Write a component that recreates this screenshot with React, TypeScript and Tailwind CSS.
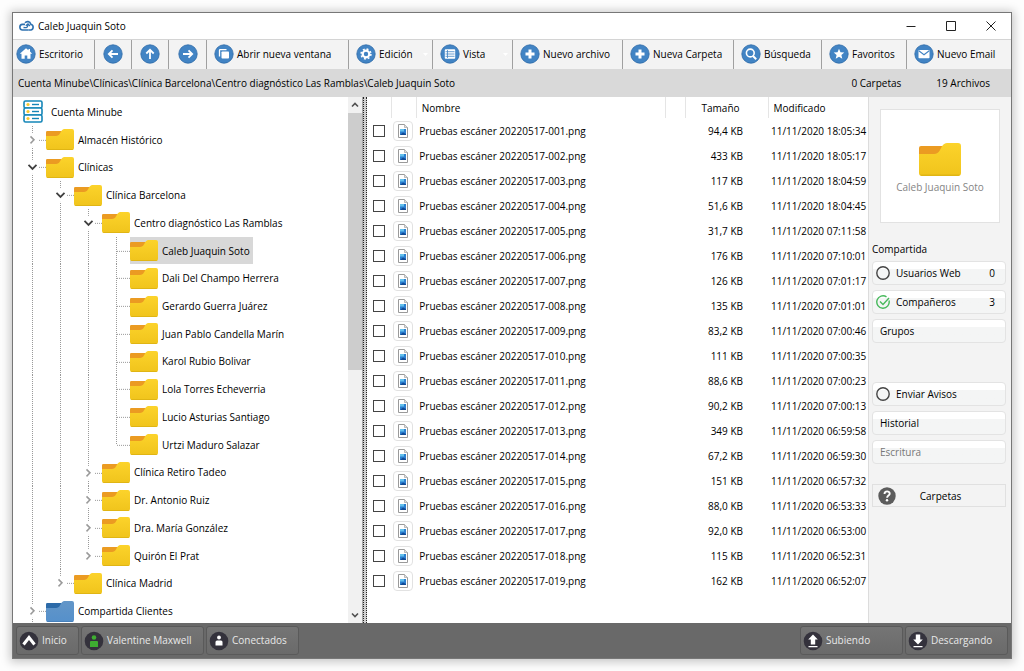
import { useState } from "react";
import type { ReactNode } from "react";

type TreeItem = {
  label: string;
  guides: boolean[];
  last?: boolean;
  state?: "open" | "closed";
  blue?: boolean;
};

const TREE: TreeItem[] = [
  { label: "Almacén Histórico", guides: [], state: "closed" },
  { label: "Clínicas", guides: [], state: "open" },
  { label: "Clínica Barcelona", guides: [true], state: "open" },
  { label: "Centro diagnóstico Las Ramblas", guides: [true, true], state: "open" },
  { label: "Caleb Juaquin Soto", guides: [true, true, true] },
  { label: "Dali Del Champo Herrera", guides: [true, true, true] },
  { label: "Gerardo Guerra Juárez", guides: [true, true, true] },
  { label: "Juan Pablo Candella Marín", guides: [true, true, true] },
  { label: "Karol Rubio Bolivar", guides: [true, true, true] },
  { label: "Lola Torres Echeverria", guides: [true, true, true] },
  { label: "Lucio Asturias Santiago", guides: [true, true, true] },
  { label: "Urtzi Maduro Salazar", guides: [true, true, true], last: true },
  { label: "Clínica Retiro Tadeo", guides: [true, true], state: "closed" },
  { label: "Dr. Antonio Ruiz", guides: [true, true], state: "closed" },
  { label: "Dra. María González", guides: [true, true], state: "closed" },
  { label: "Quirón El Prat", guides: [true, true], state: "closed", last: true },
  { label: "Clínica Madrid", guides: [true], state: "closed", last: true },
  { label: "Compartida Clientes", guides: [], state: "closed", blue: true },
];

const FILES = [
  ["001", "94,4 KB", "18:05:34"],
  ["002", "433 KB", "18:05:17"],
  ["003", "117 KB", "18:04:59"],
  ["004", "51,6 KB", "18:04:45"],
  ["005", "31,7 KB", "07:11:58"],
  ["006", "176 KB", "07:10:01"],
  ["007", "126 KB", "07:01:17"],
  ["008", "135 KB", "07:01:01"],
  ["009", "83,2 KB", "07:00:46"],
  ["010", "111 KB", "07:00:35"],
  ["011", "88,6 KB", "07:00:23"],
  ["012", "90,2 KB", "07:00:13"],
  ["013", "349 KB", "06:59:58"],
  ["014", "67,2 KB", "06:59:30"],
  ["015", "151 KB", "06:57:32"],
  ["016", "88,0 KB", "06:53:33"],
  ["017", "92,0 KB", "06:53:00"],
  ["018", "115 KB", "06:52:31"],
  ["019", "162 KB", "06:52:07"],
];

function Folder({ className, blue }: { className: string; blue?: boolean }) {
  const id = blue ? "folder-blue" : "folder-yellow";
  return (
    <svg viewBox="0 0 42 33" preserveAspectRatio="none" className={className} aria-hidden="true">
      <defs>
        <linearGradient id={id} x1="0" y1="0" x2="0" y2="1">
          <stop offset="0" stopColor={blue ? "#6396c8" : "#fcd32b"} />
          <stop offset="1" stopColor={blue ? "#5590cb" : "#f0c41c"} />
        </linearGradient>
      </defs>
      <path d="M2 3h22v16H0V5q0-2 2-2z" fill={blue ? "#2c6aa8" : "#eb9b22"} />
      <path d="M0 11h15c6 0 6-6 9-9 1-1 2-2 4-2h11q3 0 3 3v27q0 3-3 3H3q-3 0-3-3z" fill={`url(#${id})`} />
      <path d="M1 31.500q1 1.500 2 1.500h36q1 0 2-1.500z" fill={blue ? "#4680bb" : "#e0b514"} />
    </svg>
  );
}

function Guide({ visible }: { visible: boolean }) {
  return (
    <svg className="h-full w-7 shrink-0" aria-hidden="true">
      {visible && <line x1="14.5" x2="14.5" y1="0" y2="100%" stroke="#999" strokeDasharray="1 1" />}
    </svg>
  );
}

function Branch({ last, state }: { last?: boolean; state?: "open" | "closed" }) {
  return (
    <svg className="h-full w-7 shrink-0" aria-hidden="true">
      <line x1="14.5" x2="14.5" y1="0" y2={last ? "50%" : "100%"} stroke="#999" strokeDasharray="1 1" />
      <svg y="50%" overflow="visible">
        {state && <rect x="8" y="-7" width="12" height="14" fill="#fff" />}
        <path d={state ? "M21 .5h7" : "M15 .5h13"} stroke="#999" strokeDasharray="1 1" />
        {state === "open" && <path d="m10.500-2 4 4 4-4" fill="none" stroke="#404040" strokeWidth="1.800" />}
        {state === "closed" && <path d="m12.500-3.500 3.500 3.500-3.500 3.500" fill="none" stroke="#9a9a9a" strokeWidth="1.500" />}
      </svg>
    </svg>
  );
}

function ServerIcon() {
  return (
    <svg viewBox="0 0 20 23" className="h-[23px] w-5 shrink-0" aria-hidden="true">
      {[1, 8, 15].map((y) => (
        <g key={y}>
          <rect x="1" y={y} width="18" height="7" rx="1.500" fill="#fff" stroke="#1586b8" strokeWidth="1.600" />
          <circle cx="5" cy={y + 3.5} r="1.600" fill="#f5c72c" />
          <path d={`M9 ${y + 3.5}h7`} stroke="#1586b8" strokeWidth="1.400" />
        </g>
      ))}
    </svg>
  );
}

function Disc({ children }: { children: ReactNode }) {
  return (
    <svg viewBox="0 0 20 20" className="size-5 shrink-0" aria-hidden="true" fill="none" stroke="#fff" strokeWidth="1.800">
      <circle cx="10" cy="10" r="9.200" fill="#4284c4" stroke="#2f6ba8" strokeWidth="0.800" />
      {children}
    </svg>
  );
}

const plus = <path d="M10 5.500v9M5.500 10h9" strokeWidth="3" />;

const TOOLS: { label: string; text?: string; icon: ReactNode; menu?: boolean }[] = [
  { label: "Escritorio", text: "Escritorio", icon: <path d="M10 4.200 3.800 9.800h1.700v5h3.200v-3.300h2.600v3.300h3.200v-5h1.700L14 7.600V5h-1.500v1.300z" fill="#fff" stroke="none" /> },
  { label: "Atrás", icon: <path d="M15 10H6M9.500 6.300 5.800 10l3.700 3.700" /> },
  { label: "Subir nivel", icon: <path d="M10 15V6M6.300 9.500 10 5.800l3.700 3.700" /> },
  { label: "Adelante", icon: <path d="M5 10h9M10.500 6.300l3.700 3.700-3.700 3.700" /> },
  {
    label: "Abrir nueva ventana",
    text: "Abrir nueva ventana",
    icon: (
      <>
        <path d="M12.500 5.700H6.200q-.7 0-.7.7v6" strokeWidth="1.300" />
        <rect x="7.500" y="7.500" width="7.500" height="7" rx=".8" fill="#fff" stroke="none" />
      </>
    ),
  },
  {
    label: "Edición",
    text: "Edición",
    menu: true,
    icon: (
      <>
        <circle cx="10" cy="10" r="3.300" strokeWidth="2.200" />
        <circle cx="10" cy="10" r="4.900" strokeWidth="1.600" strokeDasharray="1.900 1.950" />
      </>
    ),
  },
  {
    label: "Vista",
    text: "Vista",
    menu: true,
    icon: (
      <>
        <rect x="4.800" y="5.300" width="10.400" height="9.400" rx=".8" fill="#fff" stroke="none" />
        <path d="M5.500 7.700h9M5.500 10h9M5.500 12.300h9M7.500 6v8" stroke="#4284c4" strokeWidth=".8" />
      </>
    ),
  },
  { label: "Nuevo archivo", text: "Nuevo archivo", icon: plus },
  { label: "Nueva Carpeta", text: "Nueva Carpeta", icon: plus },
  {
    label: "Búsqueda",
    text: "Búsqueda",
    icon: (
      <>
        <circle cx="9.300" cy="9" r="3.900" strokeWidth="1.600" />
        <path d="m12 12 3.200 3.200" strokeWidth="2" />
      </>
    ),
  },
  { label: "Favoritos", text: "Favoritos", icon: <path d="m10 4.800 1.500 3.500 3.800.3-2.900 2.500.9 3.700-3.300-2-3.300 2 .9-3.700-2.900-2.500 3.800-.3z" fill="#fff" stroke="none" /> },
  {
    label: "Nuevo Email",
    text: "Nuevo Email",
    icon: (
      <>
        <rect x="4.500" y="6" width="11" height="8.300" rx=".8" fill="#fff" stroke="none" />
        <path d="m4.800 6.800 5.200 4 5.200-4" stroke="#4284c4" strokeWidth="1.100" />
      </>
    ),
  },
];

function FileIcon() {
  return (
    <span className="flex size-5 items-center justify-center rounded-sm border border-[#e2e2e2] bg-white">
      <svg viewBox="0 0 12 14" className="h-3.5 w-3" aria-hidden="true">
        <path d="M1.500.5h6l3 3v10h-9z" fill="#fff" stroke="#9a9a9a" />
        <path d="M7.500.5v3h3" fill="#ddd" stroke="#a5a5a5" strokeWidth=".7" />
        <rect x="3" y="5" width="6" height="6" fill="#2b7fd0" />
        <path d="M3 5h4v2.500H3z" fill="#63c0ec" />
        <path d="m3 11 3-2.500L9 10v1z" fill="#134a94" />
      </svg>
    </span>
  );
}

function SideButton({ children, muted }: { children: ReactNode; muted?: boolean }) {
  return (
    <button
      type="button"
      className={`flex h-6 w-full items-center rounded border border-[#e3e3e3] bg-linear-to-b from-white from-30% to-[#f4f5f5] to-30% text-left ${muted ? "text-[#777]" : ""}`}
    >
      {children}
    </button>
  );
}

function Ring() {
  return (
    <svg viewBox="0 0 14 14" className="ml-[3px] mr-1.5 size-3.5 shrink-0" aria-hidden="true">
      <circle cx="7" cy="7" r="6.200" fill="none" stroke="#444" strokeWidth="1.400" />
    </svg>
  );
}

function TaskButton({ label, className, children }: { label: string; className: string; children: ReactNode }) {
  return (
    <button
      type="button"
      className={`flex h-[29px] items-center gap-[3px] rounded-[3px] border border-[#5a5a5a] bg-linear-to-b from-[#757575] to-[#6a6a6a] pl-0.5 text-[#e8e8e8] ${className}`}
    >
      <svg viewBox="0 0 20 20" className="size-5 shrink-0" aria-hidden="true">
        <circle cx="10" cy="10" r="9.300" fill="#34323c" />
        {children}
      </svg>
      <span className="pb-0.5">{label}</span>
    </button>
  );
}

export default function App() {
  const [selected, setSelected] = useState("Caleb Juaquin Soto");

  return (
    <div className="flex h-screen bg-[#fdfdfd] p-3 font-['Open_Sans',sans-serif] text-[10px] leading-4 text-black">
      <div className="flex min-w-0 flex-1 flex-col border border-[#777] bg-white shadow-[0_1px_9px_2px_#00000038]">
        <header className="flex h-[27px] shrink-0 items-center border-b border-[#d4d4d4] pl-1.5 pb-px">
          <svg viewBox="0 0 16 12" className="mr-[3px] h-3 w-4" aria-hidden="true" fill="none" stroke="#2e71b0" strokeWidth="1.600">
            <path d="M9.500 10H4a2.800 2.800 0 0 1-.6-5.600H6" />
            <path d="M6 2.800C7.500 1 11 1 11.800 4.200A3 3 0 0 1 12 10H9.500" />
            <path d="M4.500 7.500c3.500.6 4.300-.5 4.500-3M6.800 5.800 9 3.800l2 2.200" strokeWidth="1.300" />
          </svg>
          <h1 className="flex-1">Caleb Juaquin Soto</h1>
          <button type="button" aria-label="Minimizar" className="flex w-10 justify-center">
            <svg viewBox="0 0 10 10" className="size-2.5" stroke="#222"><path d="M.5 5.500h9" /></svg>
          </button>
          <button type="button" aria-label="Maximizar" className="flex w-10 justify-center">
            <svg viewBox="0 0 10 10" className="size-2.5" fill="none" stroke="#222"><path d="M.5.5h9v9h-9z" /></svg>
          </button>
          <button type="button" aria-label="Cerrar" className="flex w-10 justify-center">
            <svg viewBox="0 0 10 10" className="size-2.5" stroke="#222"><path d="m.5.5 9 9M9.500.5l-9 9" /></svg>
          </button>
        </header>

        <nav className="grid h-[29px] shrink-0 grid-cols-[82fr_37fr_37fr_38fr_142fr_84fr_80fr_110fr_111fr_88fr_85fr_104fr] bg-[#f3f3f3]">
          {TOOLS.map((tool, i) => (
            <button
              key={tool.label}
              type="button"
              aria-label={tool.label}
              className={`flex min-w-0 items-center gap-[3px] whitespace-nowrap pb-px ${i < TOOLS.length - 1 ? "border-r border-[#a0a0a0]" : ""} ${tool.text ? (i ? "pl-[7px]" : "pl-[3px]") : "justify-center"}`}
            >
              <Disc>{tool.icon}</Disc>
              {tool.text}
              {tool.menu && (
                <svg viewBox="0 0 5 3" className="ml-auto mr-1 h-[3px] w-[5px]" aria-hidden="true"><path d="M0 0h5L2.500 3z" fill="#fff" /></svg>
              )}
            </button>
          ))}
        </nav>

        <div className="flex h-7 shrink-0 items-center bg-[#d9d9d9] pl-[5px] pr-[21px]">
          <span className="flex-1">Cuenta Minube\Clínicas\Clínica Barcelona\Centro diagnóstico Las Ramblas\Caleb Juaquin Soto</span>
          <span className="mr-[35px]">0 Carpetas</span>
          <span>19 Archivos</span>
        </div>

        <main className="flex min-h-0 flex-1">
          <section className="flex w-[35%] overflow-hidden" aria-label="Carpetas">
            <ul className="flex h-[528px] min-w-0 flex-1 flex-col pl-[5px] pt-px">
              <li className="flex min-h-0 flex-1 items-center gap-2 pl-[5px]">
                <ServerIcon />
                Cuenta Minube
              </li>
              {TREE.map((item) => (
                <li key={item.label} className="flex min-h-0 flex-1 items-center">
                  {item.guides.map((visible, i) => <Guide key={i} visible={visible} />)}
                  <Branch last={item.last} state={item.state} />
                  <button
                    type="button"
                    onClick={() => setSelected(item.label)}
                    className={`flex h-full items-center gap-1 whitespace-nowrap pr-[3px] ${selected === item.label ? "bg-[#d8d8d8]" : ""}`}
                  >
                    <Folder className="h-[21px] w-7 shrink-0" blue={item.blue} />
                    {item.label}
                  </button>
                </li>
              ))}
            </ul>
            <div className="flex w-3.5 shrink-0 flex-col bg-[#f1f1f1]">
              <button type="button" aria-label="Desplazar arriba" className="flex h-4 items-center justify-center">
                <svg viewBox="0 0 8 6" className="h-1.5 w-2" fill="none" stroke="#505050" strokeWidth="1.600"><path d="m1 4.500 3-3 3 3" /></svg>
              </button>
              <div className="min-h-0 flex-1"><div className="h-[52%] bg-[#cdcdcd]" /></div>
              <button type="button" aria-label="Desplazar abajo" className="flex h-4 items-center justify-center">
                <svg viewBox="0 0 8 6" className="h-1.5 w-2" fill="none" stroke="#505050" strokeWidth="1.600"><path d="m1 1.500 3 3 3-3" /></svg>
              </button>
            </div>
          </section>
          <div className="flex w-[5px] shrink-0 border-l border-[#a8a8a8] bg-[#d0d0d0]">
            <div className="flex-1 border-x border-dotted border-[#222]" />
          </div>

          <section className="min-w-0 flex-1 overflow-hidden" aria-label="Archivos">
            <table className="w-full table-fixed border-collapse whitespace-nowrap">
              <colgroup>
                <col className="w-6" />
                <col className="w-[25px]" />
                <col />
                <col className="w-5" />
                <col className="w-[83px]" />
                <col className="w-[100px]" />
              </colgroup>
              <thead>
                <tr className="h-[21px] text-left">
                  <th className="border-r border-[#e5e5e5]" />
                  <th className="border-r border-[#e5e5e5]" />
                  <th className="border-r border-[#e5e5e5] p-0 pl-[5px] font-normal">Nombre</th>
                  <th className="border-r border-[#e5e5e5]" />
                  <th className="border-r border-[#e5e5e5] p-0 pl-4 font-normal">Tamaño</th>
                  <th className="p-0 pl-[5px] font-normal">Modificado</th>
                </tr>
              </thead>
              <tbody>
                {FILES.map(([num, size, time]) => (
                  <tr key={num} className="h-[25px]">
                    <td className="p-0 pl-1.5">
                      <input
                        type="checkbox"
                        aria-label={`Seleccionar Pruebas escáner 20220517-${num}.png`}
                        className="block size-3 appearance-none border border-[#444] bg-white checked:bg-[#4284c4]"
                      />
                    </td>
                    <td className="p-0 pl-0.5"><FileIcon /></td>
                    <td className="p-0 pl-[3px]">Pruebas escáner 20220517-{num}.png</td>
                    <td />
                    <td className="p-0 pr-[25px] text-right">{size}</td>
                    <td className="p-0 pl-[3px]">11/11/2020 {time}</td>
                  </tr>
                ))}
              </tbody>
            </table>
          </section>

          <aside className="w-[143px] shrink-0 border-l border-[#dcdcdc] bg-[#f3f3f3] pl-[3px] pr-[5px]">
            <figure className="mx-2 mr-1.5 mt-3 flex h-[114px] flex-col items-center border border-[#e2e2e2] bg-white pt-[33px] text-[#858585]">
              <Folder className="h-[33px] w-[42px]" />
              <figcaption className="mt-[3px] whitespace-nowrap">Caleb Juaquin Soto</figcaption>
            </figure>
            <h2 className="mb-1 mt-[18px]">Compartida</h2>
            <div className="flex flex-col gap-[5px]">
              <SideButton><Ring /><span className="flex-1">Usuarios Web</span><span className="pr-2.5">0</span></SideButton>
              <SideButton>
                <svg viewBox="0 0 14 14" className="ml-[3px] mr-1.5 size-3.5 shrink-0" aria-hidden="true" fill="none" stroke="#48b95c" strokeWidth="1.400">
                  <path d="M13 5.500A6.200 6.200 0 1 1 10.500 1.900" />
                  <path d="m4 6.500 3 3L13 3" />
                </svg>
                <span className="flex-1">Compañeros</span><span className="pr-2.5">3</span>
              </SideButton>
              <SideButton><span className="pl-[7px]">Grupos</span></SideButton>
            </div>
            <div className="mt-[39px] flex flex-col gap-[5px]">
              <SideButton><Ring />Enviar Avisos</SideButton>
              <SideButton><span className="pl-[7px]">Historial</span></SideButton>
              <SideButton muted><span className="pl-[7px]">Escritura</span></SideButton>
            </div>
            <button type="button" className="mt-5 flex h-[23px] w-full items-center border border-[#e0e0e0] pl-[5px]">
              <svg viewBox="0 0 18 18" className="size-[18px] shrink-0" aria-hidden="true" fill="none">
                <circle cx="9" cy="9" r="8.700" fill="#5c5c5c" />
                <path d="M6.500 7c0-3.500 5.300-3.300 5.200-.3 0 1.900-2.600 1.900-2.600 4" stroke="#fff" strokeWidth="1.900" />
                <circle cx="9" cy="13.300" r="1.200" fill="#fff" />
              </svg>
              <span className="flex-1 pr-5">Carpetas</span>
            </button>
          </aside>
        </main>

        <footer className="flex h-[35px] shrink-0 items-center gap-0.5 bg-[#696969] px-[3px]">
          <TaskButton label="Inicio" className="w-[63px]">
            <path d="m4.500 13.500 5.500-7 5.500 7" fill="none" stroke="#fff" strokeWidth="3" />
          </TaskButton>
          <TaskButton label="Valentine Maxwell" className="w-[123px]">
            <circle cx="10" cy="6.500" r="2.300" fill="#3eae31" />
            <path d="M6 16v-5q0-1 1-1h6q1 0 1 1v5z" fill="#3eae31" />
          </TaskButton>
          <TaskButton label="Conectados" className="w-[93px]">
            <circle cx="10" cy="6.500" r="1.900" fill="#fff" />
            <path d="M6.500 14.500V11q0-1.500 1.500-1.500h4q1.500 0 1.500 1.500v3.500z" fill="#fff" />
          </TaskButton>
          <TaskButton label="Subiendo" className="ml-auto w-[103px]">
            <path d="m10 3.500 4.800 5h-2.600v5H7.800v-5H5.200zM5.500 15h9v1.300h-9z" fill="#fff" />
          </TaskButton>
          <TaskButton label="Descargando" className="w-[103px]">
            <path d="M7.800 3.500h4.400v5h2.600l-4.800 5-4.800-5h2.600zM5.500 15h9v1.300h-9z" fill="#fff" />
          </TaskButton>
        </footer>
      </div>
    </div>
  );
}
